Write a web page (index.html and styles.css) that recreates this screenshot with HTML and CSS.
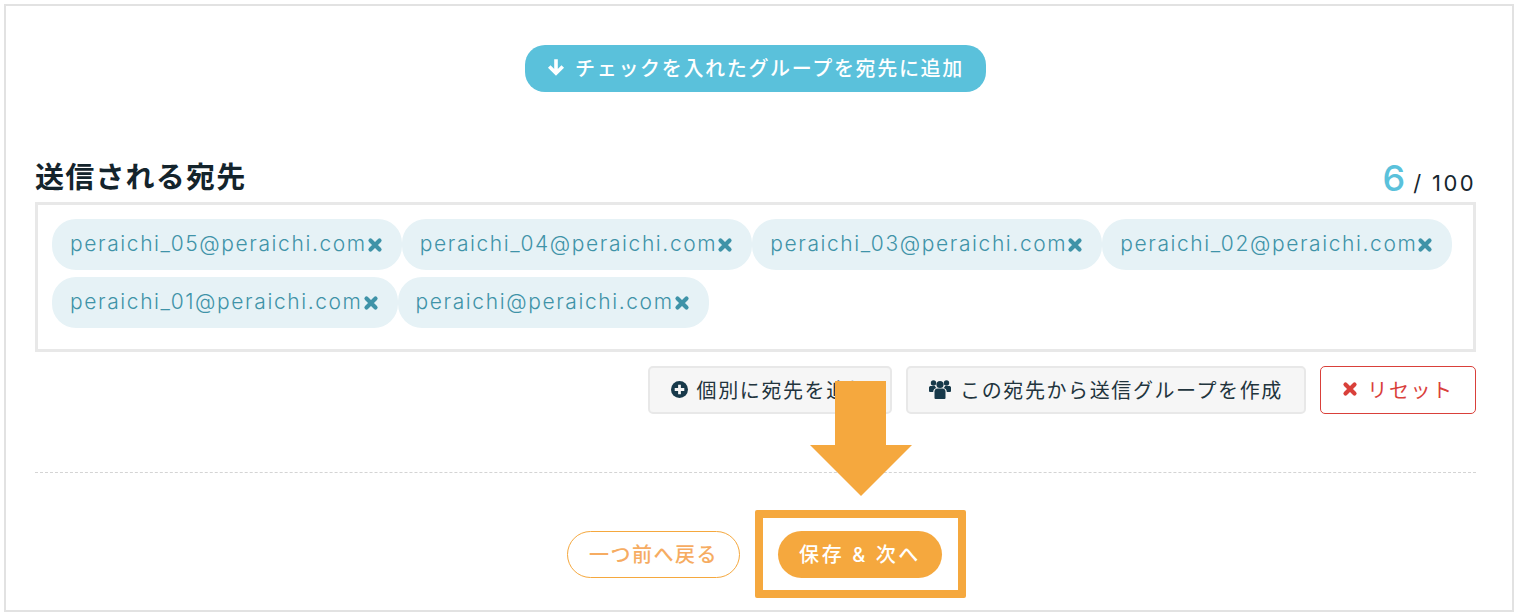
FILE: index.html
```html
<!DOCTYPE html>
<html lang="ja">
<head>
  <meta charset="UTF-8">
  <meta name="viewport" content="width=device-width, initial-scale=1.0">
  <title>送信される宛先</title>
  <link rel="stylesheet" href="styles.css">
</head>
<body>
  <svg class="defs" width="0" height="0">
    <symbol id="icon-times" viewBox="0 0 16 16">
      <path d="M3.500 3.500L12.500 12.500M12.500 3.500L3.500 12.500" fill="none" stroke="currentColor" stroke-width="4.200" stroke-linecap="round"/>
    </symbol>
  </svg>

  <div class="panel">
    <div class="add-row">
      <button class="btn-add">
        <svg class="icon-arrow" viewBox="0 0 16 16"><path d="M8 1V13.500M2 7.500l6 6 6-6" fill="none" stroke="currentColor" stroke-width="3.200"/></svg>
        チェックを入れたグループを宛先に追加
      </button>
    </div>

    <div class="list-head">
      <h2>送信される宛先</h2>
      <div class="count"><span class="count-num">6</span> / 100</div>
    </div>

    <div class="chips">
      <span class="chip">peraichi_05@peraichi.com<svg class="icon-x"><use href="#icon-times"/></svg></span>
      <span class="chip">peraichi_04@peraichi.com<svg class="icon-x"><use href="#icon-times"/></svg></span>
      <span class="chip">peraichi_03@peraichi.com<svg class="icon-x"><use href="#icon-times"/></svg></span>
      <span class="chip">peraichi_02@peraichi.com<svg class="icon-x"><use href="#icon-times"/></svg></span>
      <span class="chip">peraichi_01@peraichi.com<svg class="icon-x"><use href="#icon-times"/></svg></span>
      <span class="chip">peraichi@peraichi.com<svg class="icon-x"><use href="#icon-times"/></svg></span>
    </div>

    <div class="actions">
      <button class="btn btn-individual">
        <svg class="icon-btn" viewBox="0 0 16 16"><circle cx="8" cy="8" r="8" fill="currentColor"/><path d="M8 3.500v9M3.500 8h9" stroke="#f6f6f6" stroke-width="2.600"/></svg>
        個別に宛先を追加
      </button>
      <button class="btn btn-group">
        <svg class="icon-users" viewBox="0 0 22 20"><circle cx="11" cy="5.500" r="3.600" fill="currentColor"/><circle cx="4.500" cy="4" r="2.700" fill="currentColor"/><circle cx="17.500" cy="4" r="2.700" fill="currentColor"/><path d="M5.500 12.500c0-2 1.500-3 3-3h5c1.500 0 3 1 3 3V19q0 1-1 1h-9q-1 0-1-1z" fill="currentColor"/><path d="M0 8.500C0 7.500 1 7 2 7h4c.3 1 .8 1.600 1.500 2-2 .5-3.300 1.800-3.300 4H1q-1 0-1-1zM22 8.500C22 7.500 21 7 20 7h-4c-.3 1-.8 1.600-1.500 2 2 .5 3.300 1.800 3.300 4H21q1 0 1-1z" fill="currentColor"/></svg>
        この宛先から送信グループを作成
      </button>
      <button class="btn btn-reset">
        <svg class="icon-x"><use href="#icon-times"/></svg>
        リセット
      </button>
    </div>

    <div class="footer">
      <button class="btn-back">一つ前へ戻る</button>
      <button class="btn-save">保存 &amp; 次へ<span class="highlight"></span></button>
    </div>

    <!-- annotation arrow pointing at the save button -->
    <svg class="note-arrow" viewBox="0 0 102 115"><path d="M25 0H76V64H102L51 115L0 64H25z" fill="#f5a83e"/></svg>
  </div>
</body>
</html>
```

FILE: styles.css
```css
* {
  box-sizing: border-box;
}

html, body {
  height: 100%;
}

body {
  margin: 0;
  background-color: white;
  color: #16262e;
  font-family: Inter, "Noto Sans CJK JP", sans-serif;
  overflow: hidden;
}

button {
  font-family: inherit;
  cursor: pointer;
}

.defs {
  position: absolute;
}

.panel {
  position: relative;
  width: 1510px;
  height: 608px;
  margin: 4px 0 0 4px;
  padding: 39px 36px 0 29px;
  border: 2px solid #e2e2e2;
}

.add-row {
  display: flex;
  justify-content: center;
}

.btn-add {
  display: flex;
  align-items: center;
  gap: 10px;
  height: 47px;
  padding: 0 22px 3px;
  border: none;
  border-radius: 20px;
  background-color: #5ac1db;
  color: white;
  font-size: 20px;
  font-weight: 500;
  letter-spacing: 1.670px;
}

.icon-arrow {
  width: 18px;
  height: 18px;
}

.list-head {
  display: flex;
  align-items: flex-end;
  justify-content: space-between;
  height: 50px;
  margin-top: 60px;
  padding-bottom: 5px;
}

.list-head h2 {
  margin: 0;
  font-size: 29px;
  font-weight: 700;
  line-height: 38px;
  letter-spacing: 1.200px;
  color: #14242c;
}

.count {
  margin-bottom: -4px;
  font-size: 22px;
  line-height: 36px;
  letter-spacing: 2.400px;
}

.count-num {
  margin-right: -3px;
  color: #5ac1db;
  font-size: 36px;
  font-weight: 500;
}

.chips {
  display: flex;
  flex-wrap: wrap;
  align-content: flex-start;
  row-gap: 7px;
  height: 150px;
  padding: 14px;
  border: 3px solid #e8e8e8;
}

.chip {
  display: flex;
  align-items: center;
  height: 51px;
  padding: 0 19px 2px 18px;
  border-radius: 24px;
  background-color: #e6f2f6;
  color: #3f93a8;
  font-size: 21px;
  font-weight: 300;
  letter-spacing: 1.600px;
}

.icon-x {
  width: 16px;
  height: 16px;
}

.chip .icon-x {
  margin-top: 2px;
}

.actions {
  display: flex;
  justify-content: flex-end;
  gap: 14px;
  margin-top: 14px;
}

.btn {
  display: flex;
  align-items: center;
  justify-content: center;
  height: 48px;
  padding-bottom: 3px;
  border: 2px solid #e8e8e8;
  border-radius: 5px;
  background-color: #f6f6f6;
  color: #22343d;
  font-size: 20px;
  letter-spacing: 1.600px;
}

.btn-individual {
  gap: 9px;
  width: 244px;
}

.btn-group {
  gap: 9px;
  width: 400px;
}

.btn-reset {
  gap: 9px;
  width: 156px;
  border: 1.500px solid #d9403a;
  background-color: white;
  color: #d9403a;
}

.icon-btn {
  width: 17px;
  height: 17px;
  color: #17394a;
}

.icon-users {
  width: 22px;
  height: 20px;
  color: #17394a;
}

.footer {
  display: flex;
  justify-content: center;
  gap: 38px;
  margin-top: 58px;
  padding: 58px 2px 0 0;
  border-top: 1px dashed #d4d4d4;
}

.btn-back,
.btn-save {
  height: 47px;
  padding-bottom: 3px;
  border-radius: 24px;
  font-size: 20px;
  font-weight: 500;
}

.btn-back {
  width: 173px;
  border: 1.500px solid #f5a83e;
  background-color: white;
  color: #f6ac62;
  letter-spacing: 1.500px;
}

.btn-save {
  position: relative;
  width: 164px;
  border: none;
  background-color: #f5a83e;
  color: white;
  letter-spacing: 2.600px;
}

.highlight {
  position: absolute;
  top: -21px;
  right: -24px;
  bottom: -20px;
  left: -23px;
  border: 8px solid #f5a83e;
  border-radius: 2px;
}

.note-arrow {
  position: absolute;
  top: 375px;
  left: 804px;
  width: 102px;
  height: 115px;
}
```
